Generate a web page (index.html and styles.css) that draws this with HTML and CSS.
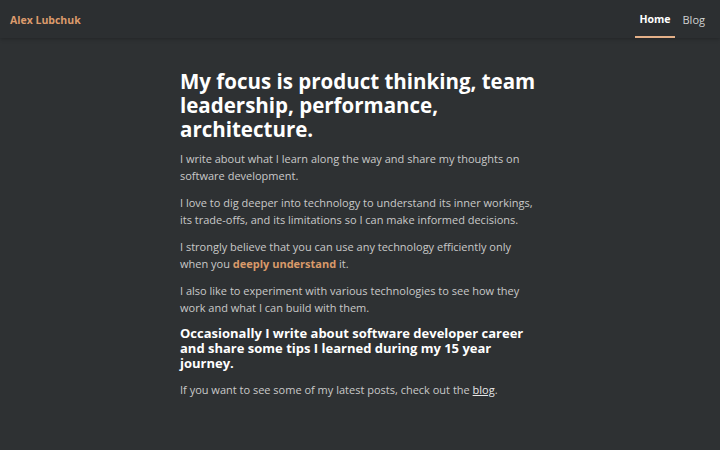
FILE: index.html
```html
<!DOCTYPE html>
<html lang="en">
<head>
<meta charset="utf-8">
<title>Alex Lubchuk</title>
<link rel="stylesheet" href="styles.css">
</head>
<body>
<header class="topbar">
  <a class="brand" href="#">Alex Lubchuk</a>
  <nav class="nav">
    <a class="nav-link active" href="#">Home</a>
    <a class="nav-link" href="#">Blog</a>
  </nav>
</header>
<main class="content">
  <h1 class="title">My focus is product thinking, team leadership, performance, architecture.</h1>
  <p>I write about what I learn along the way and share my thoughts on software development.</p>
  <p>I love to dig deeper into technology to understand its inner workings, its trade-offs, and its limitations so I can make informed decisions.</p>
  <p>I strongly believe that you can use any technology efficiently only when you <a class="accent" href="#">deeply understand</a> it.</p>
  <p>I also like to experiment with various technologies to see how they work and what I can build with them.</p>
  <h2 class="subtitle">Occasionally I write about software developer career and share some tips I learned during my 15 year journey.</h2>
  <p>If you want to see some of my latest posts, check out the <a class="plain" href="#">blog</a>.</p>
</main>
</body>
</html>
```

FILE: styles.css
```css
html, body {
  margin: 0;
  padding: 0;
}
body {
  background: #2e3133;
  color: #c9c9c9;
  font-family: "Open Sans", "DejaVu Sans", sans-serif;
  width: 720px;
  height: 450px;
  overflow: hidden;
}
.topbar {
  height: 38px;
  display: flex;
  align-items: stretch;
  justify-content: space-between;
  padding: 0 11px 0 10px;
  background: #2c2f31;
  box-shadow: 0 1px 4px rgba(0,0,0,0.25);
}
.brand {
  display: flex;
  align-items: center;
  color: #dc9b6c;
  font-weight: 700;
  font-size: 10.5px;
  text-decoration: none;
  padding-top: 1px;
}
.nav {
  display: flex;
  gap: 4px;
}
.nav-link {
  display: flex;
  align-items: center;
  padding: 2px 4px 0;
  font-size: 11px;
  color: #d2d2d2;
  text-decoration: none;
  border-bottom: 2px solid transparent;
}
.nav-link.active {
  color: #ffffff;
  font-weight: 700;
  font-size: 10.5px;
  border-bottom-color: #e4b088;
}
.content {
  width: 360px;
  margin: 0 auto;
  padding-top: 31px;
}
.title {
  margin: 0 0 8.5px;
  font-size: 20.5px;
  line-height: 24px;
  font-weight: 700;
  color: #ffffff;
}
p {
  margin: 0 0 10px;
  font-size: 11px;
  line-height: 17px;
}
.subtitle {
  margin: 0 0 10px;
  font-size: 13px;
  line-height: 15px;
  font-weight: 700;
  color: #ffffff;
}
.accent {
  display: inline-block;
  color: #d99a6a;
  font-weight: 700;
  text-decoration: none;
}
.plain {
  color: #e8e8e8;
  text-decoration: underline;
}
```
